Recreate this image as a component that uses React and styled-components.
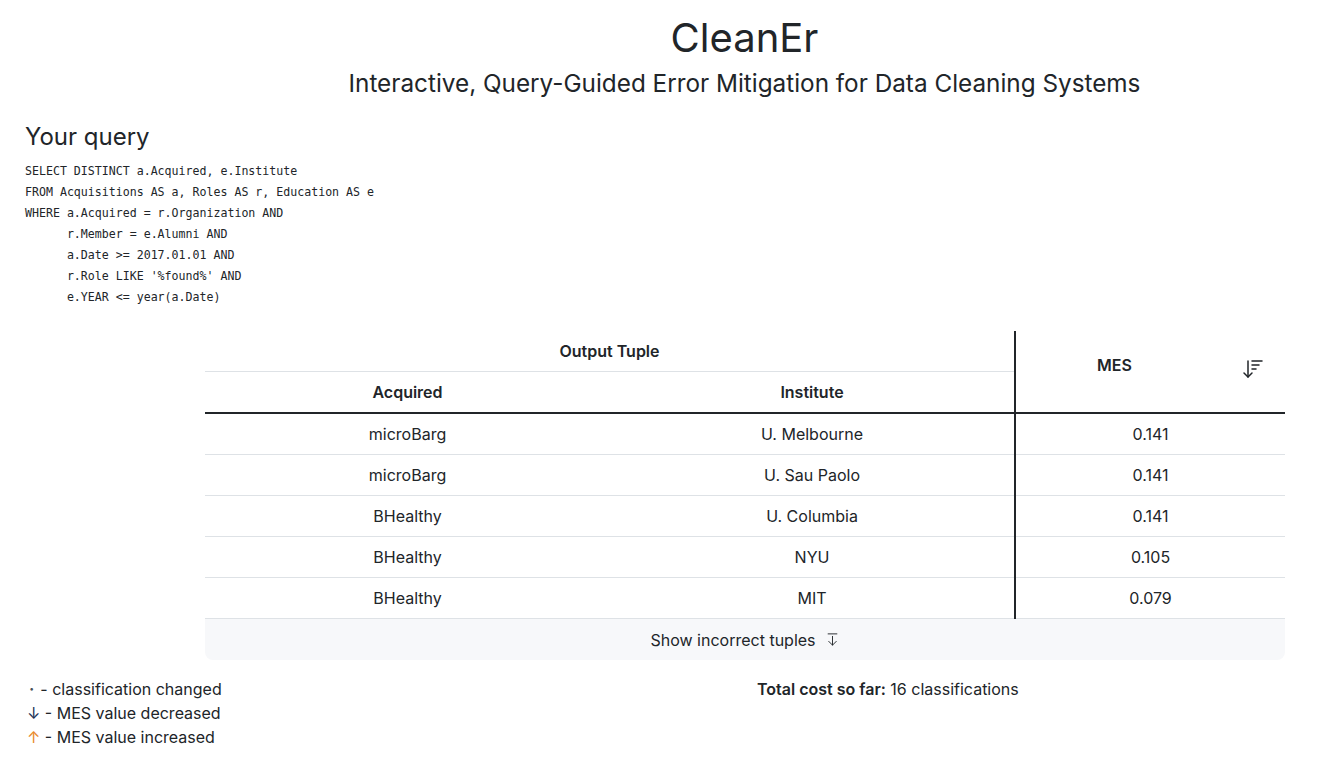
import React from 'react';
import styled, { createGlobalStyle } from 'styled-components';
import { ArrowDownWideNarrow, ArrowDownFromLine } from 'lucide-react';

const GlobalStyle = createGlobalStyle`
  html, body {
    margin: 0;
    padding: 0;
    background: #fff;
    color: #212529;
    font-family: Inter, "Noto Sans", sans-serif;
  }
`;

const Page = styled.div`
  padding: 14px 25px 20px;
`;

const Header = styled.header`
  display: flex;
  flex-direction: column;
  align-items: center;
  padding-left: 150px;
`;

const Title = styled.h1`
  margin: 0;
  font-size: 40px;
  line-height: 48px;
  font-weight: 400;
`;

const Subtitle = styled.h2`
  margin: 7px 0 0;
  font-size: 24.3px;
  line-height: 29px;
  font-weight: 400;
`;

const SectionTitle = styled.h3`
  margin: 24px 0 10px;
  font-size: 24px;
  line-height: 29px;
  font-weight: 400;
`;

const Query = styled.pre`
  margin: 0;
  font-family: "DejaVu Sans Mono", "Liberation Mono", monospace;
  font-size: 11.6px;
  line-height: 21px;
  color: #212529;
`;

const TableWrap = styled.div`
  margin: 23px 0 0 180px;
  width: 1080px;
`;

const Table = styled.table`
  width: 100%;
  border-collapse: collapse;
  table-layout: fixed;
  font-size: 16px;
`;

const Th = styled.th`
  height: ${p => p.$h || 40}px;
  padding: 0;
  font-weight: 600;
  text-align: center;
  vertical-align: middle;
  border-bottom: ${p => (p.$thick ? '2px solid #212529' : '1px solid #dee2e6')};
  border-left: ${p => (p.$divider ? '2px solid #212529' : 'none')};
`;

const MesHead = styled.div`
  display: flex;
  align-items: center;
  padding: 0 20px 6px 0;

  span {
    flex: 1;
    text-align: center;
    margin: 0 28px 8px 0;
  }
`;

const Td = styled.td`
  height: 40px;
  padding: 0;
  text-align: center;
  vertical-align: middle;
  border-bottom: 1px solid #dee2e6;
  border-left: ${p => (p.$divider ? '2px solid #212529' : 'none')};
`;

const Footer = styled.button`
  display: flex;
  align-items: center;
  justify-content: center;
  gap: 9px;
  width: 100%;
  height: 41px;
  border: none;
  border-radius: 0 0 8px 8px;
  background: #f7f8fa;
  color: #212529;
  font-family: inherit;
  font-size: 16px;
  cursor: pointer;
  padding: 0;
`;

const Bottom = styled.div`
  display: grid;
  grid-template-columns: 732px auto;
  margin-top: 17px;
  font-size: 16px;
  line-height: 24px;
`;

const Legend = styled.div`
  display: flex;
  flex-direction: column;
  padding-left: 2px;
`;

const Mark = styled.span`
  color: ${p => p.$color};
  font-weight: ${p => (p.$bold ? 700 : 400)};
  margin-left: ${p => p.$indent || 0}px;
  margin-right: ${p => p.$gap || 0}px;
`;

const Cost = styled.div`
  b {
    font-weight: 600;
  }
`;

const rows = [
  ['microBarg', 'U. Melbourne', '0.141'],
  ['microBarg', 'U. Sau Paolo', '0.141'],
  ['BHealthy', 'U. Columbia', '0.141'],
  ['BHealthy', 'NYU', '0.105'],
  ['BHealthy', 'MIT', '0.079'],
];

const sql = `SELECT DISTINCT a.Acquired, e.Institute
FROM Acquisitions AS a, Roles AS r, Education AS e
WHERE a.Acquired = r.Organization AND
      r.Member = e.Alumni AND
      a.Date >= 2017.01.01 AND
      r.Role LIKE '%found%' AND
      e.YEAR <= year(a.Date)`;

export default function App() {
  return (
    <Page>
      <GlobalStyle />
      <Header>
        <Title>CleanEr</Title>
        <Subtitle>Interactive, Query-Guided Error Mitigation for Data Cleaning Systems</Subtitle>
      </Header>

      <SectionTitle>Your query</SectionTitle>
      <Query>{sql}</Query>

      <TableWrap>
        <Table>
          <colgroup>
            <col style={{ width: 405 }} />
            <col style={{ width: 405 }} />
            <col style={{ width: 270 }} />
          </colgroup>
          <thead>
            <tr>
              <Th colSpan={2} $h={40}>Output Tuple</Th>
              <Th rowSpan={2} $divider $thick>
                <MesHead>
                  <span>MES</span>
                  <ArrowDownWideNarrow size={24} strokeWidth={1.5} />
                </MesHead>
              </Th>
            </tr>
            <tr>
              <Th $h={40} $thick>Acquired</Th>
              <Th $h={40} $thick>Institute</Th>
            </tr>
          </thead>
          <tbody>
            {rows.map((r, i) => (
              <tr key={i}>
                <Td>{r[0]}</Td>
                <Td>{r[1]}</Td>
                <Td $divider>{r[2]}</Td>
              </tr>
            ))}
          </tbody>
        </Table>
        <Footer>
          Show incorrect tuples
          <ArrowDownFromLine size={15} strokeWidth={1.5} />
        </Footer>
      </TableWrap>

      <Bottom>
        <Legend>
          <div><Mark $color="#495057" $bold $indent={2} $gap={6}>·</Mark>- classification changed</div>
          <div><Mark $color="#1d3557">↓</Mark> - MES value decreased</div>
          <div><Mark $color="#e8892b">↑</Mark> - MES value increased</div>
        </Legend>
        <Cost>
          <b>Total cost so far:</b> 16 classifications
        </Cost>
      </Bottom>
    </Page>
  );
}
